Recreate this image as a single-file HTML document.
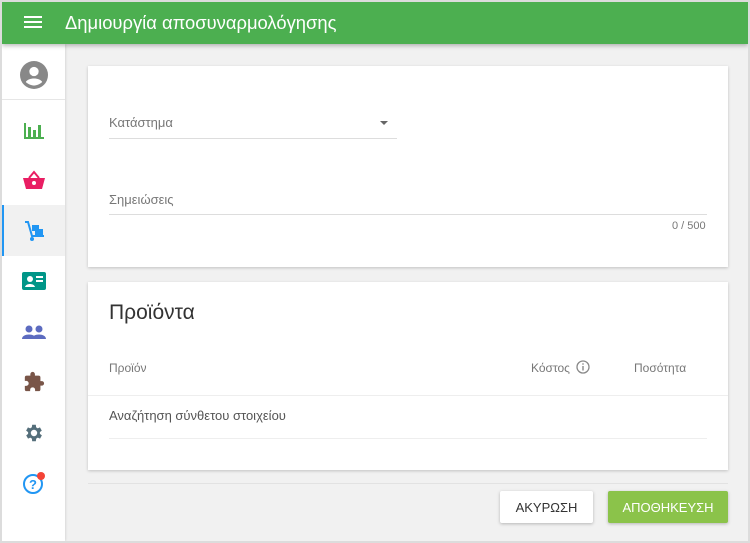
<!DOCTYPE html>
<html><head><meta charset="utf-8"><style>
*{box-sizing:border-box;margin:0;padding:0}
body{width:750px;height:543px;background:#dcdcdc;font-family:"Liberation Sans",sans-serif;position:relative;overflow:hidden}
.frame{position:absolute;left:2px;top:2px;width:746px;height:539px;background:#f1f1f1;overflow:hidden}
.top{position:absolute;left:0;top:0;width:746px;height:42px;background:#4caf50;color:#fff;box-shadow:0 2px 4px rgba(0,0,0,.25);z-index:2}
.top .t{position:absolute;left:63px;top:10px;font-size:18.4px}
.side{position:absolute;left:0;top:42px;width:63px;height:497px;background:#fff;box-shadow:1px 0 2px rgba(0,0,0,.1)}
.ic{position:absolute;left:0;width:63px;height:50px;display:flex;align-items:center;justify-content:center}
.card{position:absolute;left:86px;width:640px;background:#fff;box-shadow:0 1px 3px rgba(0,0,0,.2)}
.lbl{position:absolute;font-size:13px;color:#777}
.line{position:absolute;height:1px;background:#ddd}
.btn{position:absolute;top:489px;height:32px;font-size:13px;display:flex;align-items:center;justify-content:center;border-radius:2px;box-shadow:0 1px 3px rgba(0,0,0,.25)}
</style></head><body><div class="frame">
<div class="top">
<svg style="position:absolute;left:22px;top:13px" width="18" height="14"><rect y="1" width="18" height="2" fill="#fff"/><rect y="6" width="18" height="2" fill="#fff"/><rect y="11" width="18" height="2" fill="#fff"/></svg>
<div class="t">Δημιουργία αποσυναρμολόγησης</div></div>
<div class="side">
<div class="ic" style="top:6px;height:50px;border-bottom:1px solid #e6e6e6"><svg width="28" height="28" viewBox="0 0 24 24"><circle cx="12" cy="12" r="12" fill="#888"/><circle cx="12" cy="9" r="4" fill="#fff"/><path d="M5 18c2-4 12-4 14 0c-2 2-5 3-7 3s-5-1-7-3z" fill="#fff"/></svg></div>
<div class="ic" style="top:61px"><svg width="20" height="18"><rect x="0" y="2" width="2" height="16" fill="#4caf50"/><rect x="0" y="16" width="20" height="2" fill="#4caf50"/><rect x="4" y="6" width="3" height="10" fill="#4caf50"/><rect x="9" y="9" width="3" height="7" fill="#4caf50"/><rect x="14" y="4" width="3" height="12" fill="#4caf50"/></svg></div>
<div class="ic" style="top:111px"><svg width="22" height="20" viewBox="0 0 22 20"><path d="M6 8L11 2L16 8" stroke="#e91e63" stroke-width="2" fill="none"/><path d="M0 8h22l-3 11H3z" fill="#e91e63"/><circle cx="11" cy="13" r="2" fill="#fff"/></svg></div>
<div class="ic" style="top:161px;background:#f1f1f1;border-left:2px solid #2196f3;height:51px"><svg width="22" height="22" viewBox="0 0 22 22"><path d="M1 2h3l4 14h12" stroke="#2196f3" stroke-width="2" fill="none"/><rect x="8" y="5" width="7" height="6" fill="#2196f3"/><rect x="11" y="9" width="8" height="6" fill="#2196f3"/><circle cx="8" cy="19" r="2" fill="#2196f3"/></svg></div>
<div class="ic" style="top:212px"><svg width="24" height="18"><rect width="24" height="18" rx="2" fill="#009688"/><circle cx="8" cy="7" r="3" fill="#fff"/><path d="M3 15c1-4 9-4 10 0z" fill="#fff"/><rect x="14" y="4" width="7" height="2" fill="#fff"/><rect x="14" y="8" width="7" height="2" fill="#fff"/></svg></div>
<div class="ic" style="top:263px"><svg width="24" height="14"><circle cx="7" cy="4" r="3.5" fill="#5c6bc0"/><circle cx="17" cy="4" r="3.5" fill="#5c6bc0"/><path d="M0 14c0-6 14-6 14 0zM10 14c0-6 14-6 14 0z" fill="#5c6bc0"/></svg></div>
<div class="ic" style="top:313px"><svg width="22" height="22" viewBox="0 0 24 24"><path d="M20.5 11H19V7a2 2 0 0 0-2-2h-4V3.5a2.5 2.5 0 0 0-5 0V5H4a2 2 0 0 0-2 2v3.8h1.5a2.7 2.7 0 0 1 0 5.4H2V20a2 2 0 0 0 2 2h3.8v-1.5a2.7 2.7 0 0 1 5.4 0V22H17a2 2 0 0 0 2-2v-4h1.5a2.5 2.5 0 0 0 0-5z" fill="#795548"/></svg></div>
<div class="ic" style="top:364px"><svg width="22" height="22" viewBox="0 0 24 24"><path d="M19.4 13a7.5 7.5 0 0 0 0-2l2.1-1.6-2-3.5-2.5 1a7 7 0 0 0-1.7-1L15 3h-4l-.4 2.9a7 7 0 0 0-1.7 1l-2.5-1-2 3.5L6.6 11a7.5 7.5 0 0 0 0 2l-2.1 1.6 2 3.5 2.5-1a7 7 0 0 0 1.7 1L11 21h4l.4-2.9a7 7 0 0 0 1.7-1l2.5 1 2-3.5zM13 15.5a3.5 3.5 0 1 1 0-7 3.5 3.5 0 0 1 0 7z" fill="#546e7a" transform="translate(-1 0)"/></svg></div>
<div class="ic" style="top:414px"><svg width="26" height="26" viewBox="0 0 26 26"><circle cx="12" cy="14" r="9" stroke="#2196f3" stroke-width="2" fill="none"/><text x="12" y="19" font-size="13" font-weight="bold" fill="#2196f3" text-anchor="middle" font-family="Liberation Sans">?</text><circle cx="20" cy="6" r="4" fill="#f44336"/></svg></div>
</div>
<div class="card" style="top:64px;height:201px">
<div class="lbl" style="left:21px;top:49px">Κατάστημα</div>
<svg style="position:absolute;left:292px;top:55px" width="8" height="4"><path d="M0 0h8L4 4z" fill="#666"/></svg>
<div class="line" style="left:21px;top:72px;width:288px"></div>
<div class="lbl" style="left:21px;top:126px">Σημειώσεις</div>
<div class="line" style="left:21px;top:148px;width:598px"></div>
<div class="lbl" style="left:584px;top:154px;font-size:11px">0 / 500</div>
</div>
<div class="card" style="top:280px;height:188px">
<div style="position:absolute;left:21px;top:19px;font-size:21px;color:#333">Προϊόντα</div>
<div class="lbl" style="left:21px;top:79px;font-size:12px">Προϊόν</div>
<div class="lbl" style="left:443px;top:79px;font-size:12px">Κόστος</div>
<svg style="position:absolute;left:488px;top:78px" width="14" height="14"><circle cx="7" cy="7" r="6" stroke="#888" stroke-width="1.3" fill="none"/><rect x="6.3" y="6" width="1.4" height="4.5" fill="#888"/><rect x="6.3" y="3.3" width="1.4" height="1.4" fill="#888"/></svg>
<div class="lbl" style="left:546px;top:79px;font-size:12px">Ποσότητα</div>
<div class="line" style="left:0;top:113px;width:640px;background:#eee"></div>
<div class="lbl" style="left:21px;top:126px;color:#555">Αναζήτηση σύνθετου στοιχείου</div>
<div class="line" style="left:21px;top:156px;width:598px;background:#eee"></div>
</div>
<div class="line" style="left:86px;top:481px;width:640px;background:#e2e2e2"></div>
<div class="btn" style="left:498px;width:93px;background:#fff;color:#333">ΑΚΥΡΩΣΗ</div>
<div class="btn" style="left:606px;width:120px;background:#8bc34a;color:#fff">ΑΠΟΘΗΚΕΥΣΗ</div>
</div></body></html>
